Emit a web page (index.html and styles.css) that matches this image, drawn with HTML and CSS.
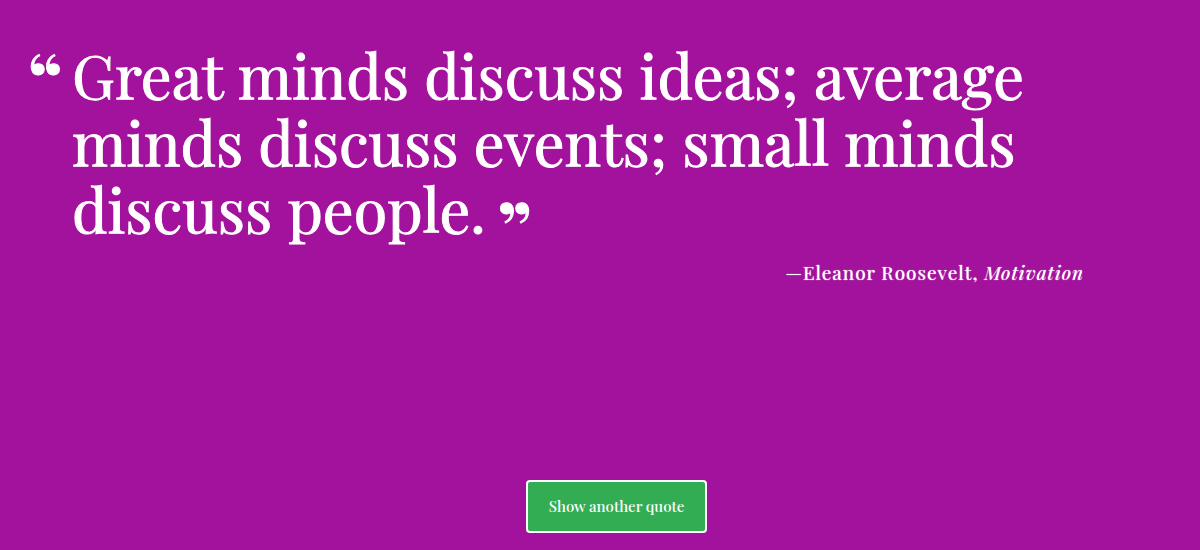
FILE: index.html
```html
<!DOCTYPE html>
<html lang="en">
<head>
<meta charset="utf-8">
<meta name="viewport" content="width=device-width, initial-scale=1">
<title>Random Quotes</title>
<link rel="stylesheet" href="styles.css">
</head>
<body class="page">
<main class="quote-box">
<p class="quote"><span class="mark mark-open">“</span>Great minds discuss ideas; average minds discuss events; small minds discuss people.<span class="mark mark-close">”</span></p>
<p class="source">—Eleanor Roosevelt, <em class="category">Motivation</em></p>
</main>
<button class="load-quote" type="button">Show another quote</button>
</body>
</html>
```

FILE: styles.css
```css
.page {
  box-sizing: border-box;
  min-height: 100vh;
  margin: 0;
  padding: 40px 30px 17px;
  display: flex;
  flex-direction: column;
  align-items: center;
  justify-content: space-between;
  background: #a3129c;
  color: #fff;
  font-family: "Playfair Display", "Liberation Serif", serif;
}

.quote-box {
  align-self: stretch;
  padding: 0 86px 0 42px;
}

.quote {
  margin: 0;
  font-size: 61px;
  line-height: 67px;
  -webkit-text-stroke: 1px #fff;
}

.mark {
  font-size: 74px;
  font-weight: 700;
  line-height: 0;
}

.mark-open {
  display: inline-block;
  width: 44px;
  margin-left: -44px;
  vertical-align: -9px;
}

.mark-close {
  margin-left: 12px;
  vertical-align: -23px;
}

.source {
  margin: 18px 0 0;
  font-size: 19px;
  line-height: 26px;
  letter-spacing: 1px;
  text-align: right;
  text-shadow: 0 0 1px #fff;
}

.load-quote {
  margin-left: 33px;
  padding: 14px 21px;
  border: 2px solid #fff;
  border-radius: 4px;
  background: #32ad53;
  color: #fff;
  font: 500 15px/21px "Playfair Display", "Liberation Serif", serif;
}
```
